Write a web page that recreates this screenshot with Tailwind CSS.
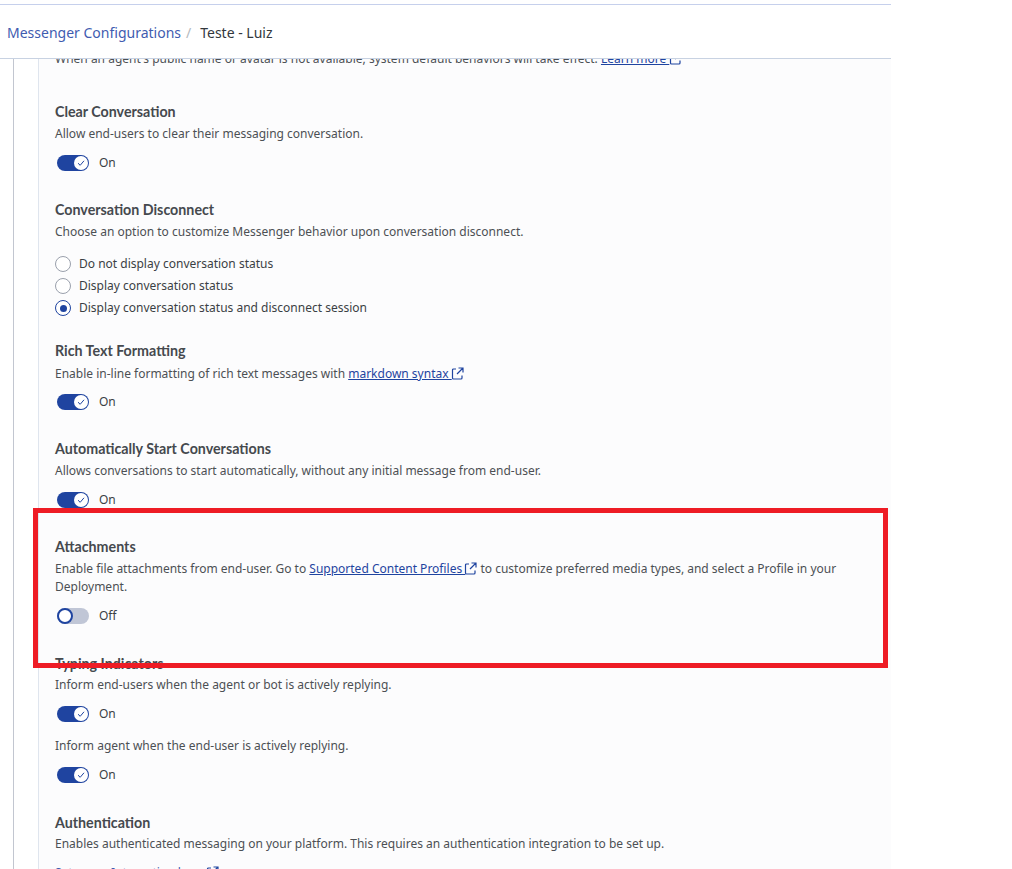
<!DOCTYPE html>
<html lang="en">
<head>
  <meta charset="UTF-8" />
  <title>Messenger Configurations</title>
  <script src="https://cdn.jsdelivr.net/npm/@tailwindcss/browser@4"></script>
</head>
<body class="bg-white h-[869px] overflow-hidden relative font-['Noto_Sans',sans-serif] text-[12px] leading-[18px] text-[#4c5054]">

  <div class="w-[891px] h-[869px] flex flex-col pt-1">
    <!-- Header -->
    <header class="h-[55px] shrink-0 bg-white border-t border-b border-t-[#c6d0ec] border-b-[#c8d2e2] flex items-center pl-[7px] pt-[2px] text-[14px] z-10">
      <a class="text-[#3f5cb0]">Messenger Configurations</a>
      <span class="text-[#b4b9c0] ml-[5px]">/</span>
      <span class="text-[#33383d] ml-[9px]">Teste - Luiz</span>
    </header>

    <div class="flex-1 min-h-0 flex overflow-hidden pl-[13px]">
      <div class="w-[26px] shrink-0 border-l border-l-[#c2c6d0] border-r border-r-[#dfe5ee]"></div>
      <main class="flex-1 bg-[#fcfcfd] pl-[16px] -mt-[9px]">

        <p class="h-[18px]">When an agent's public name or avatar is not available, system default behaviors will take effect. <a class="text-[#1f44a0] underline">Learn more </a><svg class="inline-block w-[13px] h-[13px] -mt-[2px] text-[#1f44a0]" viewBox="0 0 13 13" fill="none" stroke="currentColor" stroke-width="1.2"><path d="M5 2H2.500a1 1 0 0 0-1 1v8a1 1 0 0 0 1 1H10a1 1 0 0 0 1-1V8.500M7.500 1H12v4.500M12 1 6 7"/></svg></p>

        <section class="mt-[33px]">
          <h3 class="font-['Lato',sans-serif] font-bold text-[14.25px] leading-[22px] text-[#45494e]">Clear Conversation</h3>
          <p class="mt-[2px]">Allow end-users to clear their messaging conversation.</p>
          <div class="mt-[10px] h-[20px] flex items-center gap-[10px] text-[#3b3f44]">
            <span class="w-[32px] h-[16px] ml-[2px] rounded-full bg-[#1f44a0] flex items-center justify-end pr-[1px]"><span class="w-[14px] h-[14px] rounded-full bg-white flex items-center justify-center"><svg class="w-[8px] h-[8px]" viewBox="0 0 8 8" fill="none" stroke="#1f44a0" stroke-width="1"><path d="M1 4.2 3.2 6.3 7 1.8"/></svg></span></span>
            <span>On</span>
          </div>
        </section>

        <section class="mt-[26px]">
          <h3 class="font-['Lato',sans-serif] font-bold text-[14.25px] leading-[22px] text-[#45494e]">Conversation Disconnect</h3>
          <p class="mt-[2px]">Choose an option to customize Messenger behavior upon conversation disconnect.</p>
          <div class="mt-[14px] flex flex-col gap-[4px] text-[#3b3f44]">
            <label class="h-[18px] flex items-center gap-[8px]"><span class="w-[16px] h-[16px] rounded-full border border-[#9aa0ac] bg-white"></span>Do not display conversation status</label>
            <label class="h-[18px] flex items-center gap-[8px]"><span class="w-[16px] h-[16px] rounded-full border border-[#9aa0ac] bg-white"></span>Display conversation status</label>
            <label class="h-[18px] flex items-center gap-[8px]"><span class="w-[16px] h-[16px] rounded-full border border-[#1f44a0] bg-white flex items-center justify-center"><span class="w-[7px] h-[7px] rounded-full bg-[#1f44a0]"></span></span>Display conversation status and disconnect session</label>
          </div>
        </section>

        <section class="mt-[23px]">
          <h3 class="font-['Lato',sans-serif] font-bold text-[14.25px] leading-[22px] text-[#45494e]">Rich Text Formatting</h3>
          <p class="mt-[3px]">Enable in-line formatting of rich text messages with <a class="text-[#1f44a0] underline">markdown syntax </a><svg class="inline-block w-[13px] h-[13px] -mt-[2px] -ml-[1px] text-[#1f44a0]" viewBox="0 0 13 13" fill="none" stroke="currentColor" stroke-width="1.2"><path d="M5 2H2.500a1 1 0 0 0-1 1v8a1 1 0 0 0 1 1H10a1 1 0 0 0 1-1V8.500M7.500 1H12v4.500M12 1 6 7"/></svg></p>
          <div class="mt-[9px] h-[20px] flex items-center gap-[10px] text-[#3b3f44]">
            <span class="w-[32px] h-[16px] ml-[2px] rounded-full bg-[#1f44a0] flex items-center justify-end pr-[1px]"><span class="w-[14px] h-[14px] rounded-full bg-white flex items-center justify-center"><svg class="w-[8px] h-[8px]" viewBox="0 0 8 8" fill="none" stroke="#1f44a0" stroke-width="1"><path d="M1 4.2 3.2 6.3 7 1.8"/></svg></span></span>
            <span>On</span>
          </div>
        </section>

        <section class="mt-[26px]">
          <h3 class="font-['Lato',sans-serif] font-bold text-[14.25px] leading-[22px] text-[#45494e]">Automatically Start Conversations</h3>
          <p class="mt-[2px]">Allows conversations to start automatically, without any initial message from end-user.</p>
          <div class="mt-[10px] h-[20px] flex items-center gap-[10px] text-[#3b3f44]">
            <span class="w-[32px] h-[16px] ml-[2px] rounded-full bg-[#1f44a0] flex items-center justify-end pr-[1px]"><span class="w-[14px] h-[14px] rounded-full bg-white flex items-center justify-center"><svg class="w-[8px] h-[8px]" viewBox="0 0 8 8" fill="none" stroke="#1f44a0" stroke-width="1"><path d="M1 4.2 3.2 6.3 7 1.8"/></svg></span></span>
            <span>On</span>
          </div>
        </section>

        <section class="mt-[26px]">
          <h3 class="font-['Lato',sans-serif] font-bold text-[14.25px] leading-[22px] text-[#45494e]">Attachments</h3>
          <p class="mt-[2px] w-[790px]">Enable file attachments from end-user. Go to <a class="text-[#1f44a0] underline">Supported Content Profiles </a><svg class="inline-block w-[13px] h-[13px] -mt-[2px] -ml-[1px] text-[#1f44a0]" viewBox="0 0 13 13" fill="none" stroke="currentColor" stroke-width="1.2"><path d="M5 2H2.500a1 1 0 0 0-1 1v8a1 1 0 0 0 1 1H10a1 1 0 0 0 1-1V8.500M7.500 1H12v4.500M12 1 6 7"/></svg> to customize preferred media types, and select a Profile in your Deployment.</p>
          <div class="mt-[10px] h-[20px] flex items-center gap-[10px] text-[#3b3f44]">
            <span class="w-[32px] h-[16px] ml-[2px] rounded-full bg-[#c0c6d6] flex items-center"><span class="w-[16px] h-[16px] rounded-full bg-white border-[2.5px] border-[#1f44a0]"></span></span>
            <span>Off</span>
          </div>
        </section>

        <section class="mt-[27px]">
          <h3 class="font-['Lato',sans-serif] font-bold text-[14.25px] leading-[22px] text-[#45494e]">Typing Indicators</h3>
          <p class="mt-[1px]">Inform end-users when the agent or bot is actively replying.</p>
          <div class="mt-[10px] h-[20px] flex items-center gap-[10px] text-[#3b3f44]">
            <span class="w-[32px] h-[16px] ml-[2px] rounded-full bg-[#1f44a0] flex items-center justify-end pr-[1px]"><span class="w-[14px] h-[14px] rounded-full bg-white flex items-center justify-center"><svg class="w-[8px] h-[8px]" viewBox="0 0 8 8" fill="none" stroke="#1f44a0" stroke-width="1"><path d="M1 4.2 3.2 6.3 7 1.8"/></svg></span></span>
            <span>On</span>
          </div>
          <p class="mt-[13px]">Inform agent when the end-user is actively replying.</p>
          <div class="mt-[10px] h-[20px] flex items-center gap-[10px] text-[#3b3f44]">
            <span class="w-[32px] h-[16px] ml-[2px] rounded-full bg-[#1f44a0] flex items-center justify-end pr-[1px]"><span class="w-[14px] h-[14px] rounded-full bg-white flex items-center justify-center"><svg class="w-[8px] h-[8px]" viewBox="0 0 8 8" fill="none" stroke="#1f44a0" stroke-width="1"><path d="M1 4.2 3.2 6.3 7 1.8"/></svg></span></span>
            <span>On</span>
          </div>
        </section>

        <section class="mt-[27px]">
          <h3 class="font-['Lato',sans-serif] font-bold text-[14.25px] leading-[22px] text-[#45494e]">Authentication</h3>
          <p class="mt-[1px]">Enables authenticated messaging on your platform. This requires an authentication integration to be set up.</p>
          <p class="mt-[11px] text-[#3f5cb0]">Set up an Integration here <svg class="inline-block w-[13px] h-[13px] -mt-[2px] text-[#1f44a0]" viewBox="0 0 13 13" fill="none" stroke="currentColor" stroke-width="1.2"><path d="M5 2H2.500a1 1 0 0 0-1 1v8a1 1 0 0 0 1 1H10a1 1 0 0 0 1-1V8.500M7.500 1H12v4.500M12 1 6 7"/></svg></p>
        </section>
      </main>
    </div>
  </div>

  <!-- Red highlight box drawn over the screenshot -->
  <div class="absolute left-[33px] top-[508px] w-[855px] h-[160px] border-[5px] border-[#ee1c25] pointer-events-none"></div>
</body>
</html>
